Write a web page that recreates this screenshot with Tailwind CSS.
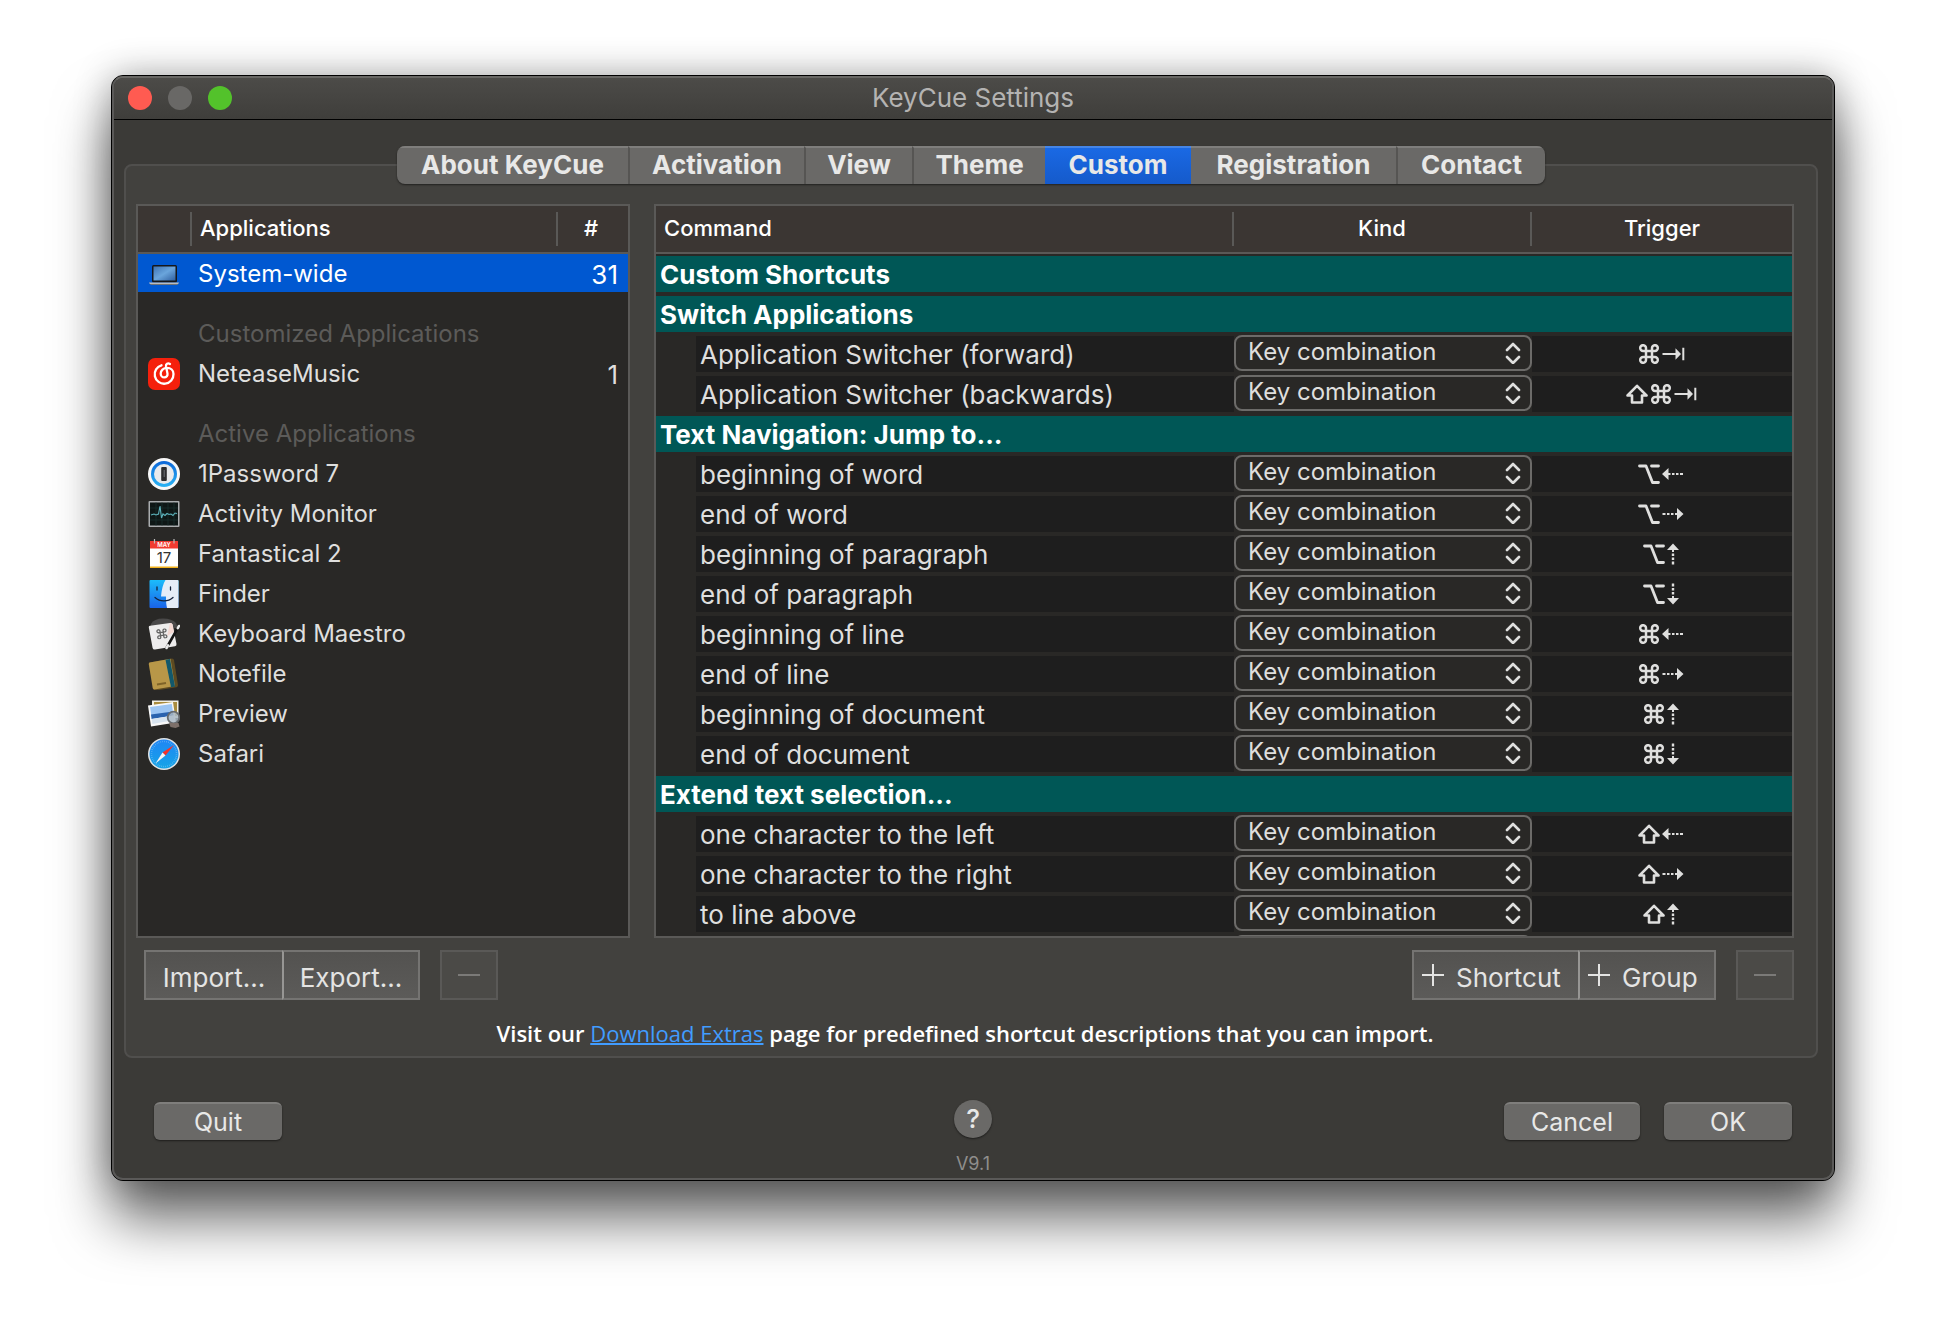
<!DOCTYPE html>
<html lang="en">
<head>
<meta charset="utf-8">
<title>KeyCue Settings</title>
<script src="https://cdn.jsdelivr.net/npm/@tailwindcss/browser@4"></script>
</head>
<body class="min-h-screen bg-white px-[111px] pt-[75px] font-['Inter',sans-serif] text-[#dfdfde]">

<svg class="hidden" aria-hidden="true">
  <symbol id="cmd" viewBox="0 0 22 20"><path d="M8 7v-2.8A2.9 2.9 0 1 0 5.100 7H16.900A2.900 2.900 0 1 0 14 4.200V15.800A2.900 2.900 0 1 0 16.900 13H5.100A2.900 2.900 0 1 0 8 15.800Z" fill="none" stroke="currentColor" stroke-width="2.500"/></symbol>
  <symbol id="opt" viewBox="0 0 22 20"><path d="M1.500 2H8L14.500 18.500H20.500M13.500 2H20.500" fill="none" stroke="currentColor" stroke-width="2.800" stroke-linecap="round" stroke-linejoin="round"/></symbol>
  <symbol id="shift" viewBox="0 0 22 20"><path d="M11 1.800L20.500 11.500H16V18.500H6V11.500H1.500Z" fill="none" stroke="currentColor" stroke-width="2.600" stroke-linejoin="round"/></symbol>
  <symbol id="tab" viewBox="0 0 24 20"><path d="M0.500 9h13V4.200L19 10l-5.500 5.800V11h-13ZM20.300 3.800h2v12.400h-2Z" fill="currentColor"/></symbol>
  <symbol id="left" viewBox="0 0 24 20"><path d="M0 10L6.500 4V9h2v2h-2v5ZM10 9h2.500v2H10ZM14 9h2.500v2H14ZM18 9h3v2h-3Z" fill="currentColor"/></symbol>
  <symbol id="right" viewBox="0 0 24 20"><path d="M21.500 10L15 4V9h-2v2h2v5ZM11.500 9H9v2h2.500ZM7.500 9H5v2h2.500ZM3.500 9H.5v2h3Z" fill="currentColor"/></symbol>
  <symbol id="up" viewBox="0 0 14 22"><path d="M6 .5L12 7H7v2H5V7H0ZM4.800 10.500h2.400V13H4.800ZM4.800 14.500h2.400V17H4.800ZM4.800 18.500h2.400V21.500H4.800Z" fill="currentColor"/></symbol>
  <symbol id="down" viewBox="0 0 14 22"><path d="M6 21.500L12 15H7v-2H5v2H0ZM4.800 11.500h2.400V9H4.800ZM4.800 7.500h2.400V5H4.800ZM4.800 3.500h2.400V.5H4.800Z" fill="currentColor"/></symbol>
</svg>

<main class="w-full rounded-xl border border-black bg-[#3b3a37] shadow-[0_38px_56px_rgba(0,0,0,0.6),0_0_36px_rgba(0,0,0,0.3)]">
<div class="overflow-hidden rounded-[11px] border-2 border-[#5a5958] border-t-[#686764]">

  <header class="grid h-[42px] grid-cols-[1fr_auto_1fr] items-center border-b border-black bg-linear-to-b from-[#4c4b48] to-[#3f3e3b] px-[14px] pb-0.5">
    <div class="flex gap-4">
      <button aria-label="Close" class="size-6 rounded-full bg-[#ff5b51]"></button>
      <button aria-label="Minimize" class="size-6 rounded-full bg-[#696866]"></button>
      <button aria-label="Zoom" class="size-6 rounded-full bg-[#53c22b]"></button>
    </div>
    <h1 class="text-[26px] leading-[34px] text-[#b4b3b2]">KeyCue Settings</h1>
  </header>

  <div class="pl-[10px] pr-[14px] pt-[26px]">
    <nav role="tablist" class="relative flex justify-center text-[26px] font-bold leading-8 text-[#e8e8e7]">
      <div class="flex h-[38px] overflow-hidden rounded-lg bg-[#6a6967] shadow-[0_1px_2px_rgba(0,0,0,0.5)]">
        <button role="tab" class="w-[231px] border-t-2 border-[#7f7e7c] pb-0.5">About KeyCue</button>
        <button role="tab" class="w-[176px] border-l-2 border-t-2 border-l-[#565553] border-t-[#7f7e7c] pb-0.5">Activation</button>
        <button role="tab" class="w-[108px] border-l-2 border-t-2 border-l-[#565553] border-t-[#7f7e7c] pb-0.5">View</button>
        <button role="tab" class="w-[133px] border-l-2 border-t-2 border-l-[#565553] border-t-[#7f7e7c] pb-0.5">Theme</button>
        <button role="tab" aria-selected="true" class="w-[146px] border-t-2 border-[#4585e6] bg-linear-to-b from-[#1a69e4] to-[#155acb] pb-0.5">Custom</button>
        <button role="tab" class="w-[205px] border-t-2 border-[#7f7e7c] pb-0.5">Registration</button>
        <button role="tab" class="w-[149px] border-l-2 border-t-2 border-l-[#565553] border-t-[#7f7e7c] pb-0.5">Contact</button>
      </div>
    </nav>

    <section class="-mt-5 rounded-lg border-2 border-[#504f4d] bg-[#42413e] pb-[7px] pl-[10px] pr-[22px] pt-[38px]">
      <div class="flex gap-6">
        <div class="h-[734px] w-[494px] shrink-0 overflow-hidden border-2 border-[#5a5957] bg-[#292826]">
          <table class="w-full table-fixed border-separate border-spacing-0 text-2xl">
            <thead class="text-[22px] font-medium text-white">
              <tr>
                <th class="h-12 w-[54px] border-b-2 border-[#5a5957] bg-[#3b3633] p-0" aria-label="Icon"><div class="h-[34px] border-r-2 border-[#5a5957]"></div></th>
                <th class="border-b-2 border-[#5a5957] bg-[#3b3633] p-0 text-left font-medium"><div class="h-[34px] border-r-2 border-[#5a5957] pl-2 leading-8">Applications</div></th>
                <th class="w-[70px] border-b-2 border-[#5a5957] bg-[#3b3633] p-0 pr-1 font-medium"><div class="h-[34px] leading-8">#</div></th>
              </tr>
            </thead>
            <tbody id="apps"></tbody>
          </table>
        </div>

        <div class="h-[734px] min-w-0 flex-1 overflow-hidden border-2 border-[#5a5957] bg-[#292826]">
          <table class="w-full table-fixed border-separate border-spacing-0">
            <thead class="text-[22px] text-white">
              <tr>
                <th class="h-12 w-10 border-b-2 border-[#5a5957] bg-[#3b3633] p-0 pl-2 text-left font-medium"><div class="h-[34px] w-0 leading-8 whitespace-nowrap">Command</div></th>
                <th class="border-b-2 border-[#5a5957] bg-[#3b3633] p-0"><div class="h-[34px] border-r-2 border-[#5a5957]"></div></th>
                <th class="w-[298px] border-b-2 border-[#5a5957] bg-[#3b3633] p-0 font-medium"><div class="h-[34px] border-r-2 border-[#5a5957] leading-8">Kind</div></th>
                <th class="w-[260px] border-b-2 border-[#5a5957] bg-[#3b3633] p-0 font-medium"><div class="h-[34px] leading-8">Trigger</div></th>
              </tr>
            </thead>
            <tbody id="commands"></tbody>
          </table>
        </div>
      </div>

      <div class="mt-3 flex pl-2 text-[26px] text-[#e4e4e3]">
        <button class="h-[50px] w-[140px] border-2 border-[#757472] bg-linear-to-b from-[#535250] to-[#5c5b59] pt-1">Import...</button>
        <button class="-ml-0.5 h-[50px] w-[138px] border-2 border-[#757472] border-l-[#979694] bg-linear-to-b from-[#535250] to-[#5c5b59] pt-1">Export...</button>
        <button aria-label="Remove application" disabled class="ml-5 flex h-[50px] w-[58px] items-center justify-center border-2 border-[#5a5957] bg-[#4b4a47]"><span class="h-0.5 w-[22px] bg-[#7b7a78]"></span></button>
        <button class="ml-auto flex h-[50px] w-[168px] items-center gap-3 border-2 border-[#757472] bg-linear-to-b from-[#535250] to-[#5c5b59] pl-2">
          <svg class="size-[22px]" viewBox="0 0 22 22" aria-hidden="true"><path d="M11 0v22M0 11h22" stroke="currentColor" stroke-width="2"/></svg><span class="pt-1">Shortcut</span></button>
        <button class="-ml-0.5 flex h-[50px] w-[138px] items-center gap-3 border-2 border-[#757472] border-l-[#979694] bg-linear-to-b from-[#535250] to-[#5c5b59] pl-2">
          <svg class="size-[22px]" viewBox="0 0 22 22" aria-hidden="true"><path d="M11 0v22M0 11h22" stroke="currentColor" stroke-width="2"/></svg><span class="pt-1">Group</span></button>
        <button aria-label="Remove command" disabled class="ml-5 flex h-[50px] w-[58px] items-center justify-center border-2 border-[#5a5957] bg-[#4b4a47]"><span class="h-0.5 w-[22px] bg-[#7b7a78]"></span></button>
      </div>

      <p class="mb-px mt-[18px] text-center font-['Open_Sans',sans-serif] text-[22px] font-semibold leading-[30px] text-white">Visit our <a href="#extras" class="font-normal text-[#419cff] underline decoration-2">Download Extras</a> page for predefined shortcut descriptions that you can import.</p>
    </section>
  </div>

  <footer class="grid grid-cols-[1fr_auto_1fr] items-start px-10 pb-[3px] pt-[42px] text-[25px] leading-[34px] text-[#e8e8e7]">
    <button class="mt-0.5 h-[38px] w-32 rounded-md border-t-2 border-[#7f7e7c] bg-[#6a6967] shadow-[0_1px_2px_rgba(0,0,0,0.5)]">Quit</button>
    <div class="flex flex-col items-center">
      <button aria-label="Help" class="size-[38px] rounded-full bg-[#6a6967] text-[26px] font-medium shadow-[0_1px_2px_rgba(0,0,0,0.5)]">?</button>
      <span class="mt-[15px] text-lg leading-[22px] text-[#8f8e8c]">V9.1</span>
    </div>
    <div class="mt-0.5 flex justify-end gap-6">
      <button class="h-[38px] w-[136px] rounded-md border-t-2 border-[#7f7e7c] bg-[#6a6967] shadow-[0_1px_2px_rgba(0,0,0,0.5)]">Cancel</button>
      <button class="h-[38px] w-32 rounded-md border-t-2 border-[#7f7e7c] bg-[#6a6967] shadow-[0_1px_2px_rgba(0,0,0,0.5)]">OK</button>
    </div>
  </footer>
</div>
</main>

<script>
const art = {
  laptop: `<defs><linearGradient id="scr" x1="0" y1="0" x2="1" y2="1"><stop offset="0" stop-color="#3f74b4"/><stop offset=".5" stop-color="#6aa5dc"/><stop offset="1" stop-color="#2f5f9f"/></linearGradient></defs><rect x="4" y="7" width="25" height="17.500" rx="1.500" fill="#15171b"/><rect x="5.500" y="8.500" width="22" height="14" fill="url(#scr)"/><path d="M1 24.500h30l-.8 1.500H1.800Z" fill="#b9bcc0"/><path d="M1.800 26h28.400l-1 1H3Z" fill="#6f7378"/>`,
  netease: `<rect width="32" height="32" rx="7" fill="#f5200c"/><path d="M13.500 7.300A9.400 9.400 0 1 0 25.500 16c0-3.500-2.700-6.200-6.500-6.200-3.700 0-6.300 2.800-6.300 5.600 0 2.200 1.500 4 3.600 4 2.200 0 3.500-1.800 3.200-3.800L18 8.300C17.600 6 19.800 4.700 22 6" fill="none" stroke="#fff" stroke-width="2.300" stroke-linecap="round"/>`,
  onepass: `<defs><linearGradient id="op" x1="0" y1="0" x2="0" y2="1"><stop offset="0" stop-color="#0b66d8"/><stop offset="1" stop-color="#2ab4f5"/></linearGradient></defs><circle cx="16" cy="16" r="16" fill="#f8f8f8"/><circle cx="16" cy="16" r="13" fill="url(#op)"/><circle cx="16" cy="16" r="10" fill="#e8eaec"/><rect x="13.200" y="9" width="5.600" height="14" rx="1" fill="#2c2d30"/><path d="M16.200 12v7" stroke="#6d7076" stroke-width="1"/>`,
  activity: `<rect x=".5" y="3" width="31" height="26" rx="1" fill="#a9acae"/><rect x="2" y="4.500" width="28" height="23" fill="#0e1716"/><path d="M2 10h28M2 16h28M2 22h28M8 4.500v23M14 4.500v23M20 4.500v23M26 4.500v23" stroke="#1b302d" stroke-width=".8"/><path d="M3 17l3-1 2 1 2.500-1L12 8l1.500 12 1.500-4 2 1.500 2-2 2 1 2-.5 2 1.500 2-2.500 2 .5" fill="none" stroke="#5cb2bb" stroke-width="1.100"/>`,
  fantastical: `<rect x="2" y="3" width="28" height="27" fill="#fff"/><rect x="2" y="3" width="28" height="7.500" fill="#f13a30"/><rect x="2" y="28.500" width="28" height="1.500" fill="#f2b21c"/><path d="M6.500 1v4.500M26 1v4.500" stroke="#bbb" stroke-width="1.200"/><text x="16" y="9.300" font-size="6" font-weight="600" text-anchor="middle" fill="#fff">MAY</text><text x="16" y="25" font-size="15" text-anchor="middle" fill="#333">17</text>`,
  finder: `<defs><linearGradient id="fn" x1="0" y1="0" x2="0" y2="1"><stop offset="0" stop-color="#1cbcfb"/><stop offset="1" stop-color="#1a63e8"/></linearGradient></defs><rect x="1.500" y="2" width="29" height="28" rx="1" fill="url(#fn)"/><path d="M17.500 2H29.500a1 1 0 0 1 1 1V29a1 1 0 0 1-1 1H19c-.8-3.500-1-7-1-11.500h-5C13.500 12 15 6 17.500 2Z" fill="#e6edf8"/><path d="M9 9v3M22.500 9v3" stroke="#15233c" stroke-width="1.300" stroke-linecap="round"/><path d="M7 19.500c5 4.500 13 4.500 18 0" fill="none" stroke="#15233c" stroke-width="1.300" stroke-linecap="round"/>`,
  maestro: `<path d="M3 6Q6 .5 15 .5T28 5l2 5H3Z" fill="#4a4949"/><path d="M.8 9.500Q.5 8 2 7.700L22 5Q24 4.700 24.500 6.500L28.500 26Q28.800 28 27 28.200L7 31.500Q5 31.700 4.600 30Z" fill="#eeeded"/><path d="M22 5Q24 4.700 24.500 6.500L26 14l-7 4Z" fill="#f4d9d3"/><g transform="translate(7.500 11.500) rotate(-8) scale(.52)" color="#666"><use href="#cmd" width="22" height="20"/></g><path d="M31 8L18.500 30" stroke="#151515" stroke-width="2.600" stroke-linecap="round"/><path d="M31 8l-1.200 2.100M20 27.300L18.500 30" stroke="#e9e9e9" stroke-width="2.600" stroke-linecap="round"/>`,
  notefile: `<path d="M2 4.500L24 .5q1.500 0 2 1.500L30 27q0 2-1.500 2.300L8 32.500q-2 0-2.300-1.500L.8 6.500Q.7 5 2 4.500Z" fill="#5d4a20"/><path d="M1.500 4.500L22.500.8 27 28 6.500 31.500Q5 31.500 4.700 30L.8 6Q.7 4.800 1.500 4.500Z" fill="#b89748"/><path d="M17.500 1.700L22 .9 27 28.500 23 29.300Z" fill="#12586b"/><path d="M9 26.500l9-1.500" stroke="#7e6328" stroke-width="1.800"/>`,
  preview: `<path d="M4 2.500H30.500V20H4Z" fill="#f2efe4"/><path d="M6 4H29V18H6Z" fill="#a98c3e"/><path d="M0 7.500L25 4l3 20.500L3 28.500Z" fill="#f8f8f8"/><path d="M2 9L23.800 6l1.400 9.500L3.500 18.500Z" fill="#9cc5f3"/><path d="M3 16.500l22-3 .6 4L3.600 21Z" fill="#2a62ae"/><path d="M3.700 21l22-3.500.6 4.500L4.400 26Z" fill="#d8e4ef"/><circle cx="25.500" cy="19.500" r="5.800" fill="#aab8c4" fill-opacity=".85" stroke="#666a6e" stroke-width="1.800"/><path d="M21 25h9.500l1 3.500-4 1.500-5-1Z" fill="#7d706a"/>`,
  safari: `<defs><linearGradient id="sf" x1="0" y1="0" x2="0" y2="1"><stop offset="0" stop-color="#1f86f5"/><stop offset="1" stop-color="#16a4e6"/></linearGradient></defs><circle cx="16" cy="16" r="16" fill="#dfe3e6"/><circle cx="16" cy="16" r="14.500" fill="url(#sf)"/><circle cx="16" cy="16" r="12.500" fill="none" stroke="#bfe2fb" stroke-opacity=".5" stroke-width="1.500" stroke-dasharray=".6 1.360"/><path d="M26 7L17.500 17.500l-3-3Z" fill="#f5322b"/><path d="M7.500 25.500L14.500 14.500l3 3Z" fill="#f4f4f4"/>`
};

const apps = [
  ['laptop', 'System-wide', 31, 'selected'],
  null,
  ['', 'Customized Applications', '', 'label'],
  ['netease', 'NeteaseMusic', 1],
  null,
  ['', 'Active Applications', '', 'label'],
  ['onepass', '1Password 7', ''],
  ['activity', 'Activity Monitor', ''],
  ['fantastical', 'Fantastical 2', ''],
  ['finder', 'Finder', ''],
  ['maestro', 'Keyboard Maestro', ''],
  ['notefile', 'Notefile', ''],
  ['preview', 'Preview', ''],
  ['safari', 'Safari', '']
];
document.getElementById('apps').innerHTML = apps.map(a => {
  if (!a) return '<tr><td colspan="3" class="h-5 p-0"></td></tr>';
  const [icon, name, count, kind] = a;
  const tone = kind === 'selected' ? 'bg-[#0058d1] text-white' : kind === 'label' ? 'text-[#5c5b59]' : '';
  return `<tr>
    <td class="p-0 pb-0.5"><div class="flex h-[38px] items-center pl-[10px] pt-px ${tone}">${icon ? `<svg class="size-8" viewBox="0 0 32 32" aria-hidden="true">${art[icon]}</svg>` : ''}</div></td>
    <td class="p-0 pb-0.5"><div class="h-[38px] pl-1.5 leading-10 whitespace-nowrap ${tone}">${name}</div></td>
    <td class="p-0 pb-0.5"><div class="h-[38px] pr-[10px] text-right text-[26px] leading-[42px] ${tone}">${count}</div></td>
  </tr>`;
}).join('');

const commands = [
  ['Custom Shortcuts'],
  ['Switch Applications'],
  ['Application Switcher (forward)', 'cmd tab'],
  ['Application Switcher (backwards)', 'shift cmd tab'],
  ['Text Navigation: Jump to...'],
  ['beginning of word', 'opt left'],
  ['end of word', 'opt right'],
  ['beginning of paragraph', 'opt up'],
  ['end of paragraph', 'opt down'],
  ['beginning of line', 'cmd left'],
  ['end of line', 'cmd right'],
  ['beginning of document', 'cmd up'],
  ['end of document', 'cmd down'],
  ['Extend text selection...'],
  ['one character to the left', 'shift left'],
  ['one character to the right', 'shift right'],
  ['to line above', 'shift up']
];
const keySize = {
  cmd: 'h-5 w-[22px]', opt: 'h-5 w-[22px]', shift: 'h-5 w-[22px]', tab: 'h-5 w-6',
  left: 'h-5 w-6', right: 'h-5 w-6', up: 'h-[22px] w-[14px]', down: 'h-[22px] w-[14px]'
};
document.getElementById('commands').innerHTML = commands.map(([name, keys]) => {
  if (!keys) return `<tr><th colspan="4" class="p-0 py-0.5 text-left text-[26px] font-bold text-white"><div class="h-9 bg-[#005756] pl-1 leading-[38px]">${name}</div></th></tr>`;
  return `<tr>
    <td class="p-0"></td>
    <td class="p-0 py-0.5"><div class="h-9 bg-[#1e1e1e] pl-1 text-[26px] leading-[38px] whitespace-nowrap">${name}</div></td>
    <td class="p-0 align-top"><div class="relative pt-px">
      <select aria-label="Kind of ${name}" class="block h-9 w-full appearance-none rounded-lg border-2 border-[#6c6b69] bg-[#292826] pb-0.5 pl-3 text-2xl leading-[30px]"><option>Key combination</option></select>
      <svg class="pointer-events-none absolute right-[11px] top-2 h-[22px] w-4" viewBox="0 0 16 22" fill="none" stroke="currentColor" stroke-width="2.600" stroke-linecap="round" stroke-linejoin="round" aria-hidden="true"><path d="M2 8L8 2l6 6M2 15L8 21l6-6"/></svg>
    </div></td>
    <td class="p-0 py-0.5"><div role="img" aria-label="${keys}" class="flex h-9 items-center justify-center gap-0.5 bg-[#1e1e1e]">${keys.split(' ').map(k => `<svg class="${keySize[k]}"><use href="#${k}"/></svg>`).join('')}</div></td>
  </tr>`;
}).join('') + '<tr><td colspan="2" class="p-0"></td><td class="p-0 align-top"><div class="mt-px h-9 rounded-lg border-2 border-[#6c6b69]"></div></td></tr>';
</script>
</body>
</html>
